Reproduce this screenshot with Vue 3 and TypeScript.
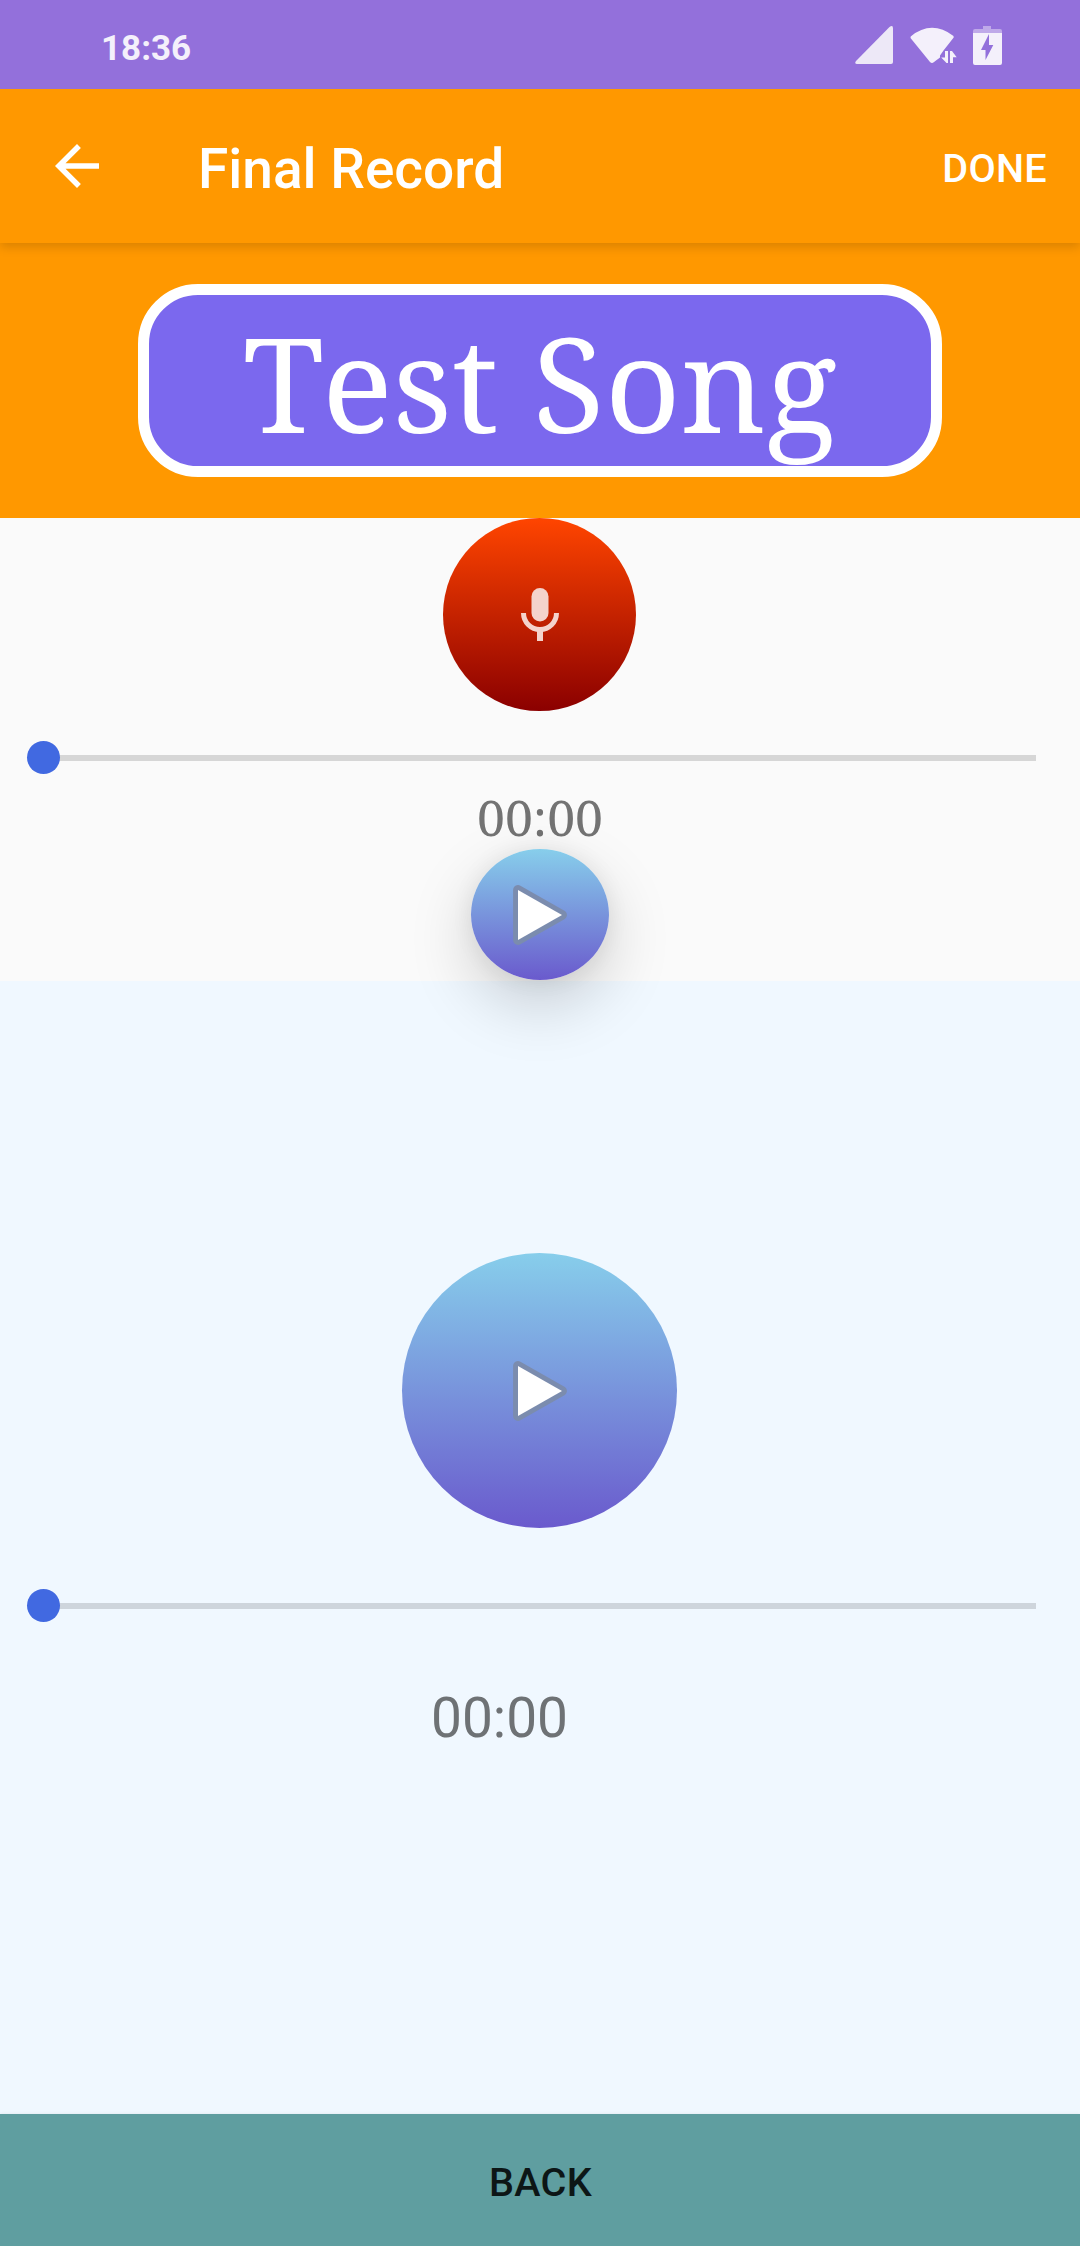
<script setup lang="ts">
import { ref } from 'vue'

const songTitle = ref('Test Song')
const recordTime = ref('00:00')
const playbackTime = ref('00:00')
</script>

<template>
  <div class="screen">
    <header class="status">
      <span class="clock">18:36</span>
      <svg class="status-icons" width="150" height="89" viewBox="850 0 150 89" overflow="visible">
        <path d="M857 64 Q854 63.5 856 61 L889.500 27 Q893 24.500 893 28.500 V62 Q893 64 891 64Z" fill="#ede8f7" />
        <path d="M910.700 36.500 Q931.500 19.500 953.500 36 L953.700 37.500 L943.500 50.500 L940 55.500 V57.500 L934 62 Q932 64 930 62 L910.500 38Z" fill="#f4f0fb" />
        <path d="M941.200 57.500 H945 V51 H948 V63 H946.500Z M950 51 H952 L956.700 57.200 H953 V63 H950Z" fill="#f4f0fb" />
        <path d="M983 26 H991 V29 H1000 Q1002 29 1002 31 V33 H973 V31 Q973 29 975 29 H983Z" fill="#bfa9e9" />
        <path fill-rule="evenodd" d="M973 33 H1002 V63 Q1002 65 1000 65 H975 Q973 65 973 63Z M989 34 L981 50 H985.500 V60 L993.300 45 H989Z" fill="#f4f0fb" />
      </svg>
    </header>

    <nav class="appbar">
      <svg class="arrow" width="66" height="66" viewBox="0 0 24 24">
        <path fill="#fff" d="M20 11H7.830l5.590-5.590L12 4l-8 8 8 8 1.410-1.410L7.830 13H20v-2z" />
      </svg>
      <h1>Final Record</h1>
      <button class="done">DONE</button>
    </nav>

    <section class="song">
      <div class="pill">{{ songTitle }}</div>
    </section>

    <section class="recorder">
      <button class="round record" aria-label="Record">
        <svg width="38" height="53" viewBox="0 0 38 53">
          <g fill="none" stroke="#f4d3cc">
            <path d="M2.500 25 a16.500 16.500 0 0 0 33 0" stroke-width="5" />
            <path d="M19 42 V53" stroke-width="6" />
          </g>
          <rect x="10.500" y="0" width="17" height="33.500" rx="8.500" fill="#f4d3cc" />
        </svg>
      </button>
      <div class="slider"><i class="thumb"></i></div>
      <div class="time serif">{{ recordTime }}</div>
      <button class="round play small" aria-label="Play recording">
        <svg width="56" height="62" viewBox="0 0 56 62">
          <path d="M6 6 V56 L50 31Z" fill="#7b8cae" stroke="#7b8cae" stroke-width="9.800" stroke-linejoin="round" />
          <path d="M6 6 V56 L50 31Z" fill="#fff" />
        </svg>
      </button>
    </section>

    <section class="player">
      <button class="round play large" aria-label="Play song">
        <svg width="56" height="62" viewBox="0 0 56 62">
          <path d="M6 6 V56 L50 31Z" fill="#7b8cae" stroke="#7b8cae" stroke-width="9.800" stroke-linejoin="round" />
          <path d="M6 6 V56 L50 31Z" fill="#fff" />
        </svg>
      </button>
      <div class="slider"><i class="thumb"></i></div>
      <div class="time sans">{{ playbackTime }}</div>
    </section>

    <button class="back">BACK</button>
  </div>
</template>

<style>
body {
  margin: 0;
}
</style>

<style scoped>
.screen {
  width: 1080px;
  height: 2246px;
  display: flex;
  flex-direction: column;
  overflow: hidden;
  font-family: Roboto, sans-serif;
}
button {
  border: 0;
  padding: 0;
  font: 500 39.6px/45px Roboto, sans-serif;
  letter-spacing: 0.3px;
}
.status {
  height: 89px;
  flex: none;
  background: #9370db;
  display: flex;
  justify-content: space-between;
  padding: 0 80px 0 101px;
}
.clock {
  color: #f4f0fb;
  font-size: 35px;
  font-weight: 700;
  line-height: 98px;
}
.appbar {
  height: 154px;
  flex: none;
  background: #ff9800;
  display: flex;
  align-items: center;
  padding: 0 33px 0 44px;
  color: #fff;
  position: relative;
  box-shadow: 0 4px 10px rgba(0, 0, 0, 0.15);
  clip-path: inset(0 0 -30px 0);
}
h1 {
  margin: 6px auto 0 88px;
  font-size: 55px;
  font-weight: 500;
  line-height: 64px;
}
.done {
  background: none;
  color: #fff;
  margin-top: 4px;
}
.song {
  height: 275px;
  flex: none;
  background: #ff9800;
  display: flex;
  justify-content: center;
  align-items: center;
}
.pill {
  width: 804px;
  height: 193px;
  box-sizing: border-box;
  border: 11px solid #fff;
  border-radius: 60px;
  background: #7b68ee;
  color: #fff;
  font-family: "Noto Serif", "Droid Serif", "DejaVu Serif Condensed", "DejaVu Serif", serif;
  font-size: 132px;
  font-kerning: none;
  line-height: 174px;
  text-align: center;
  white-space: nowrap;
}
.pill::first-letter {
  letter-spacing: -2px;
}
.recorder {
  height: 463px;
  flex: none;
  background: #fafafa;
  display: flex;
  flex-direction: column;
  align-items: center;
}
.round {
  border-radius: 50%;
  flex: none;
  display: flex;
  justify-content: center;
  align-items: center;
}
.record {
  width: 193px;
  height: 193px;
  margin-right: 1px;
  background: linear-gradient(#ff4500, #8b0000);
}
.record svg {
  margin: -1px 0 0 1px;
}
.slider {
  width: 992px;
  height: 6px;
  flex: none;
  display: flex;
  align-items: center;
  background: #d6d6d6;
}
.thumb {
  width: 33px;
  height: 33px;
  margin: -1px 0 0 -17px;
  flex: none;
  border-radius: 50%;
  background: #4169e1;
}
.recorder .slider {
  margin-top: 44px;
}
.time {
  flex: none;
  color: #737373;
}
.serif {
  height: 88px;
  font: 50px/112px "Noto Serif", "Droid Serif", "Liberation Serif", serif;
}
.play {
  background: linear-gradient(#87ceeb, #6a5acd);
}
.small {
  width: 138px;
  height: 131px;
  position: relative;
  box-shadow: 0 24px 64px rgba(0, 0, 0, 0.18), 0 0 22px rgba(0, 0, 0, 0.07);
}
.player {
  flex: 1;
  background: #f0f8ff;
  display: flex;
  flex-direction: column;
  align-items: center;
}
.large {
  width: 275px;
  height: 275px;
  margin: 272px 1px 0 0;
}
.player .slider {
  margin-top: 75px;
  background: #ced5dc;
}
.sans {
  margin: 77px 0 0 431px;
  align-self: flex-start;
  color: #6e7275;
  font-size: 55px;
  line-height: 64px;
}
.back {
  height: 132px;
  flex: none;
  background: #5f9ea0;
  color: #0d1616;
  padding: 4px 0 0 1px;
  box-shadow: 0 0 3px rgba(0, 0, 0, 0.08);
}
</style>
